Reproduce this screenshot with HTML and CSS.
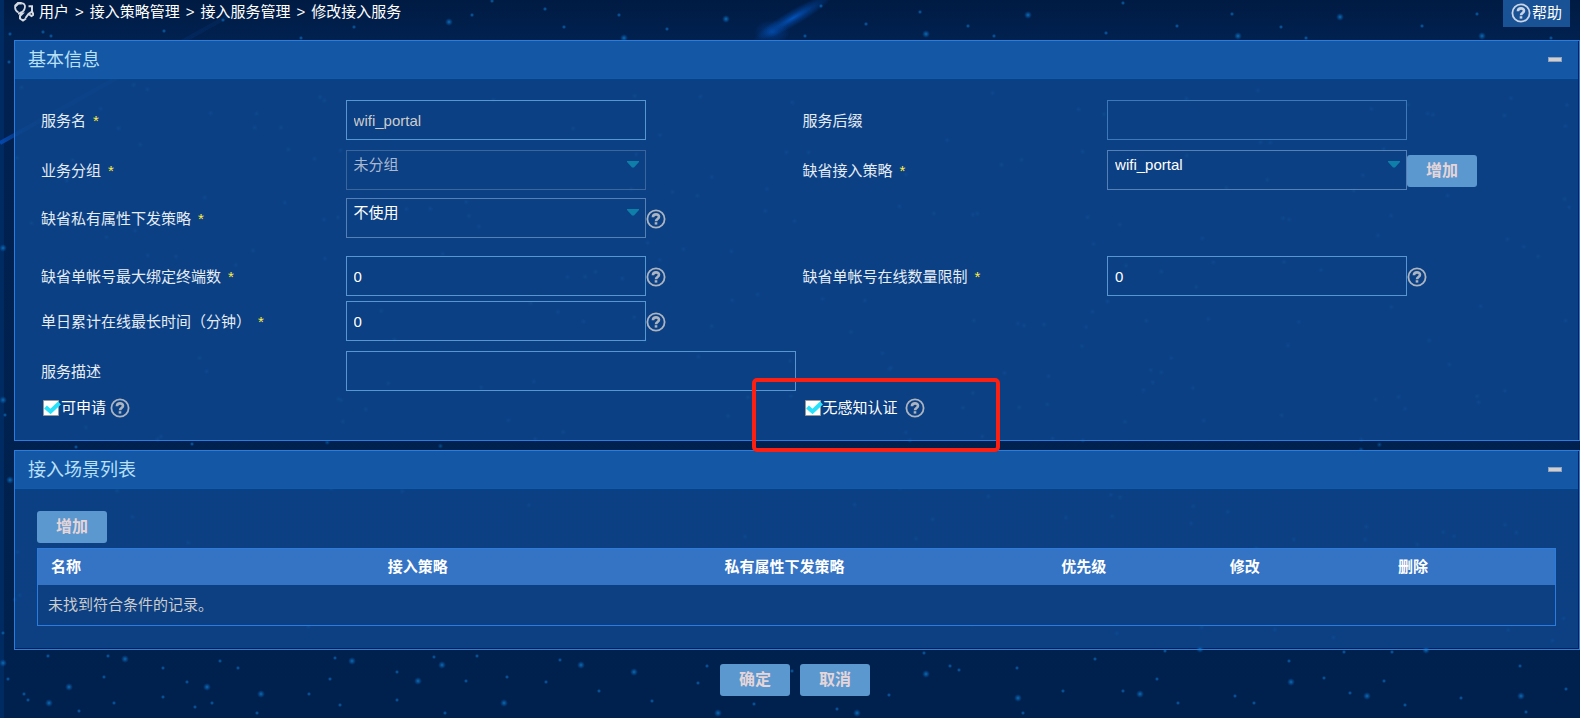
FILE: index.html
```html
<!DOCTYPE html>
<html lang="zh-CN">
<head>
<meta charset="utf-8">
<title>修改接入服务</title>
<link rel="stylesheet" href="styles.css">
</head>
<body>
<svg class="sky" aria-hidden="true"></svg>
<svg class="defs" aria-hidden="true">
  <symbol id="q" viewBox="0 0 20 20">
    <circle cx="10" cy="10" r="8.6" fill="none" stroke="currentColor" stroke-width="1.8"/>
    <path d="M6.900 8.200C7 6.200 8.300 5.400 10 5.400C11.900 5.400 13 6.400 13 7.800C13 9.900 10 10 10 12.200" fill="none" stroke="currentColor" stroke-width="2.600"/>
    <rect x="8.700" y="13.200" width="2.600" height="2.400" fill="currentColor"/>
  </symbol>
</svg>
<div class="page">
  <header class="topbar">
    <nav class="crumbs">
      <svg class="crumb-icon" viewBox="0 0 20 20" aria-hidden="true" fill="none" stroke="#d5d9e0" stroke-width="1.800">
        <path d="M4.500 10.500C1.500 9 .8 6 1.300 3.800M7.500 1.200C11.500 1.500 11.300 4.500 10.500 7C9.800 9.300 8 10.500 5.500 10.800"/>
        <path d="M1 4.200L4.200 1.200H7.800" stroke-width="2.600"/>
        <path d="M4 11.500H8.500L6 14V16.500L9 18.500L12 16.500" stroke-width="2"/>
        <path d="M14.500 4.200H18V9.500L14.500 12L11.500 16M18 9.500L19.500 12.500L17.500 14L14.500 12" stroke-width="2"/>
      </svg>
      <a href="#">用户</a><span>&gt;</span><a href="#">接入策略管理</a><span>&gt;</span><a href="#">接入服务管理</a><span>&gt;</span><a href="#">修改接入服务</a>
    </nav>
    <a class="help" href="#"><svg class="q"><use href="#q"/></svg>帮助</a>
  </header>

  <form>
  <section class="panel">
    <div class="panel-head"><h2>基本信息</h2><button type="button" class="fold" aria-label="折叠"></button></div>
    <div class="panel-body fields">
      <div class="row">
        <label for="name">服务名<i>*</i></label>
        <div class="control"><input class="box readonly" id="name" type="text" value="wifi_portal" readonly></div>
        <label for="suffix">服务后缀</label>
        <div class="control"><input class="box dim" id="suffix" type="text" readonly></div>
      </div>
      <div class="row gap-m">
        <label for="group">业务分组<i>*</i></label>
        <div class="control"><select class="box off" id="group" disabled><option>未分组</option></select></div>
        <label for="policy">缺省接入策略<i>*</i></label>
        <div class="control"><select class="box" id="policy"><option>wifi_portal</option></select><button type="button" class="btn">增加</button></div>
      </div>
      <div class="row gap-s">
        <label for="private">缺省私有属性下发策略<i>*</i></label>
        <div class="control"><select class="box" id="private"><option>不使用</option></select><svg class="q"><use href="#q"/></svg></div>
      </div>
      <div class="row gap-l">
        <label for="maxbind">缺省单帐号最大绑定终端数<i>*</i></label>
        <div class="control"><input class="box" id="maxbind" type="text" value="0"><svg class="q"><use href="#q"/></svg></div>
        <label for="maxonline">缺省单帐号在线数量限制<i>*</i></label>
        <div class="control"><input class="box" id="maxonline" type="text" value="0"><svg class="q"><use href="#q"/></svg></div>
      </div>
      <div class="row gap-xs">
        <label for="daily">单日累计在线最长时间（分钟）<i>*</i></label>
        <div class="control"><input class="box" id="daily" type="text" value="0"><svg class="q"><use href="#q"/></svg></div>
      </div>
      <div class="row gap-m">
        <label for="desc">服务描述</label>
        <div class="control"><input class="box wide" id="desc" type="text"></div>
      </div>
      <div class="row checks">
        <div class="check"><input type="checkbox" id="apply" checked><label for="apply">可申请</label><svg class="q"><use href="#q"/></svg></div>
        <div class="check marked"><input type="checkbox" id="mac" checked><label for="mac">无感知认证</label><svg class="q spaced"><use href="#q"/></svg></div>
      </div>
    </div>
  </section>

  <section class="panel">
    <div class="panel-head"><h2>接入场景列表</h2><button type="button" class="fold" aria-label="折叠"></button></div>
    <div class="panel-body scenes">
      <button type="button" class="btn">增加</button>
      <table>
        <colgroup><col class="c2"><col class="c2"><col class="c2"><col class="c1"><col class="c1"><col></colgroup>
        <thead><tr><th>名称</th><th>接入策略</th><th>私有属性下发策略</th><th>优先级</th><th>修改</th><th>删除</th></tr></thead>
        <tbody><tr><td colspan="6">未找到符合条件的记录。</td></tr></tbody>
      </table>
    </div>
  </section>

  <div class="actions">
    <button type="submit" class="btn">确定</button>
    <button type="button" class="btn">取消</button>
  </div>
  </form>
</div>
<script src="sky.js"></script>
</body>
</html>
```

FILE: styles.css
```css
*, *::after { box-sizing: border-box; }
body {
  margin: 0;
  min-height: 100vh;
  background: linear-gradient(90deg, #002a62 4px, transparent 4px), linear-gradient(#001b43, #012150 40px, #00204e);
  color: #fff;
  font: 15px/20px "Liberation Sans", "Noto Sans CJK SC", sans-serif;
}
.sky { position: absolute; inset: 0; width: 100%; height: 100%; z-index: -1; }
.defs { display: none; }
button, input, select { font: inherit; color: inherit; }
a { color: inherit; text-decoration: none; }
i { font-style: normal; color: #ffee3d; margin-left: 7px; }
.page { padding-left: 14px; overflow: hidden; }
.topbar { display: flex; justify-content: space-between; align-items: flex-start; height: 40px; padding-right: 10px; }
.crumbs { display: flex; align-items: center; gap: 6px; padding-top: 2px; }
.crumb-icon { width: 20px; height: 20px; margin-right: -1px; }
.help { display: flex; align-items: center; gap: 1px; height: 27px; padding: 0 8px; background: #1a5296; border-bottom: 1px solid #1a5296; }
.q { width: 20px; height: 20px; flex: none; color: #abb4c0; }
.help .q { color: #c9d5e5; }

.panel { border: 1px solid #2b7cdd; padding: 0 1px 0 0; margin-bottom: 9px; }
.panel-head {
  display: flex; align-items: center; justify-content: space-between;
  height: 38px; padding: 0 16px 0 13px;
  background: #1457a5; border-bottom: 1px solid #0d5cae;
}
h2 { margin: 0; font-size: 18px; line-height: 24px; font-weight: 400; color: #b9e0fa; }
.fold { width: 14px; height: 5px; padding: 0; border: 1px solid #8fa3c0; background: #d0cfd0; }
.panel-body { background: rgba(15, 73, 145, 0.8); }

.fields { padding: 21px 14px 22px 26px; }
.row { display: grid; grid-template-columns: 2fr 3fr 2fr 3fr; align-items: center; color: #e4ecf5; }
.gap-xs { margin-top: 5px; }
.gap-s { margin-top: 8px; }
.gap-m { margin-top: 10px; }
.gap-l { margin-top: 18px; }
.row > label { padding-top: 2px; }
.control { display: flex; align-items: center; color: #fff; }
.control .q, .control .btn { margin-top: 2px; }
.box {
  width: 300px; height: 40px; padding: 0 8px; margin: 0;
  border: 1px solid #5697d1; border-radius: 0; background-color: transparent; outline: 0;
}
input.box { padding: 0 7px; }
.wide { width: 450px; }
.readonly { color: #ccc; }
.dim { border-color: #3c79b9; }
select.box {
  appearance: none; padding: 0 7px 11px; border-color: #5580b5; opacity: 1;
  background: url("data:image/svg+xml,%3Csvg xmlns='http://www.w3.org/2000/svg' width='12' height='7'%3E%3Cpath d='M0 0h12v1L7 6.500H5L0 1z' fill='%230d7fa9'/%3E%3C/svg%3E") no-repeat right 6px top 10px;
}
select.off { border-color: #3b659d; color: #abb9d0; }
option { color: #000; }

.checks { grid-template-columns: 1fr 1fr; margin-top: 6px; color: #fff; }
.check { display: flex; align-items: center; height: 21px; padding-left: 2px; }
.check input {
  appearance: none; width: 18px; height: 16px; margin: 0;
  background: url("data:image/svg+xml,%3Csvg xmlns='http://www.w3.org/2000/svg' width='18' height='16'%3E%3Cpath d='M.5.5h15v15H.5z' fill='%23fff' stroke='%23999'/%3E%3Cpath d='M2.500 7l5 4.500 9-8.500' fill='none' stroke='%2329e0fa' stroke-width='4.200'/%3E%3C/svg%3E") no-repeat;
}
.check .q { margin-left: 4px; }
.check .spaced { margin-left: 7px; }
.marked { position: relative; }
.marked::after {
  content: ""; position: absolute; left: -51px; top: -19px; width: 248px; height: 74px;
  border: 4px solid #fb2011; border-radius: 5px; pointer-events: none;
}

.btn {
  width: 70px; height: 32px; padding: 0; border: 0; border-radius: 3px;
  background: #5a98cf; color: #e6d5d8; font-size: 16px; font-weight: 700;
}
.scenes { padding: 22px 22px; margin-bottom: 1px; }
.scenes .btn { display: block; margin-bottom: 5px; }
table { width: 100%; table-layout: fixed; border-collapse: separate; border-spacing: 0; border: 1px solid #2b7cdd; background: #0d4083; }
.c2 { width: 22.2%; }
.c1 { width: 11.1%; }
th { height: 36px; padding: 0 13px; background: #3573c4; text-align: left; }
td { height: 40px; padding: 0 10px; color: #ccc; }
.actions { display: flex; justify-content: center; gap: 10px; margin-top: 14px; padding: 0 4px 22px 0; }
```

FILE: sky.js
```js
// Star field and light streaks drawn behind the panels.
const small = [[48,656],[108,656],[163,668],[220,661],[104,677],[187,682],[238,668],[24,694],[28,700],[79,711],[114,703],[163,697],[195,707],[212,703],[335,658],[330,679],[309,694],[340,705],[397,672],[397,700],[434,657],[8,679],[3,633],[257,713],[477,656],[466,681],[507,677],[445,713],[560,660],[546,682],[599,691],[707,666],[698,683],[652,701],[754,704],[792,671],[837,709],[889,695],[924,653],[950,666],[959,670],[1017,668],[1063,691],[1023,713],[1095,659],[1157,679],[1123,691],[1178,703],[1165,651],[1235,696],[1254,703],[1289,661],[1324,678],[1350,693],[1384,681],[1392,652],[1344,652],[1405,705],[1461,698],[1520,666],[1566,689],[1526,712],[1123,3],[1232,14],[1177,26],[1106,33],[1281,27],[1306,38],[1477,14],[1422,26],[1551,38],[821,6],[866,24],[805,36],[920,12],[968,26],[994,36],[492,1],[472,15],[545,9],[564,27],[619,15],[667,29],[43,32],[10,34],[51,36],[164,31],[301,38],[354,27],[223,20],[9,62],[76,447],[192,444],[5,415]];
const big = [[125,659],[69,687],[207,687],[261,694],[49,703],[352,661],[418,681],[442,665],[504,703],[581,665],[634,672],[3,663],[10,480],[718,713],[857,713],[926,674],[1018,698],[1140,694],[1200,649],[1291,682],[1367,696],[1426,650],[1521,696],[1340,17],[1238,36],[1482,36],[449,22],[624,38],[726,19],[926,34],[1028,15],[3,248],[3,400]];
// The band behind the panels gets a fainter, even scatter.
const faint = [];
let seed = 7;
const rnd = () => (seed = (seed * 16807) % 2147483647) / 2147483647;
for (let i = 0; i < 300; i++) faint.push([15 + rnd() * 1560, 84 + rnd() * 560]);
const dots = (list, r) => list.map(([x, y]) => `<circle cx="${x}" cy="${y}" r="${r}"/>`).join('');
document.querySelector('.sky').innerHTML = `
<defs>
  <radialGradient id="s"><stop offset="0" stop-color="#0a70b8"/><stop offset="1" stop-color="#0a50a0" stop-opacity="0"/></radialGradient>
  <radialGradient id="comet"><stop offset="0" stop-color="#0460d8"/><stop offset=".5" stop-color="#0350b8" stop-opacity=".5"/><stop offset="1" stop-color="#0350b8" stop-opacity="0"/></radialGradient>
  <linearGradient id="ray" gradientUnits="userSpaceOnUse" x1="0" y1="143" x2="230" y2="20"><stop offset="0" stop-color="#0548b0"/><stop offset=".15" stop-color="#06397f" stop-opacity=".5"/><stop offset="1" stop-color="#06397f" stop-opacity=".2"/></linearGradient>
</defs>
<path d="M0 143L230 15" stroke="url(#ray)" stroke-width="4"/>
<ellipse cx="793" cy="18" rx="46" ry="8" transform="rotate(-30 793 18)" fill="url(#comet)" opacity=".8"/>
<ellipse cx="772" cy="32" rx="18" ry="12" fill="url(#comet)" opacity=".5"/>
<g fill="url(#s)">${dots(small, 2.3)}${dots(big, 4)}<g opacity=".6">${dots(faint, 3)}</g></g>`;
```
